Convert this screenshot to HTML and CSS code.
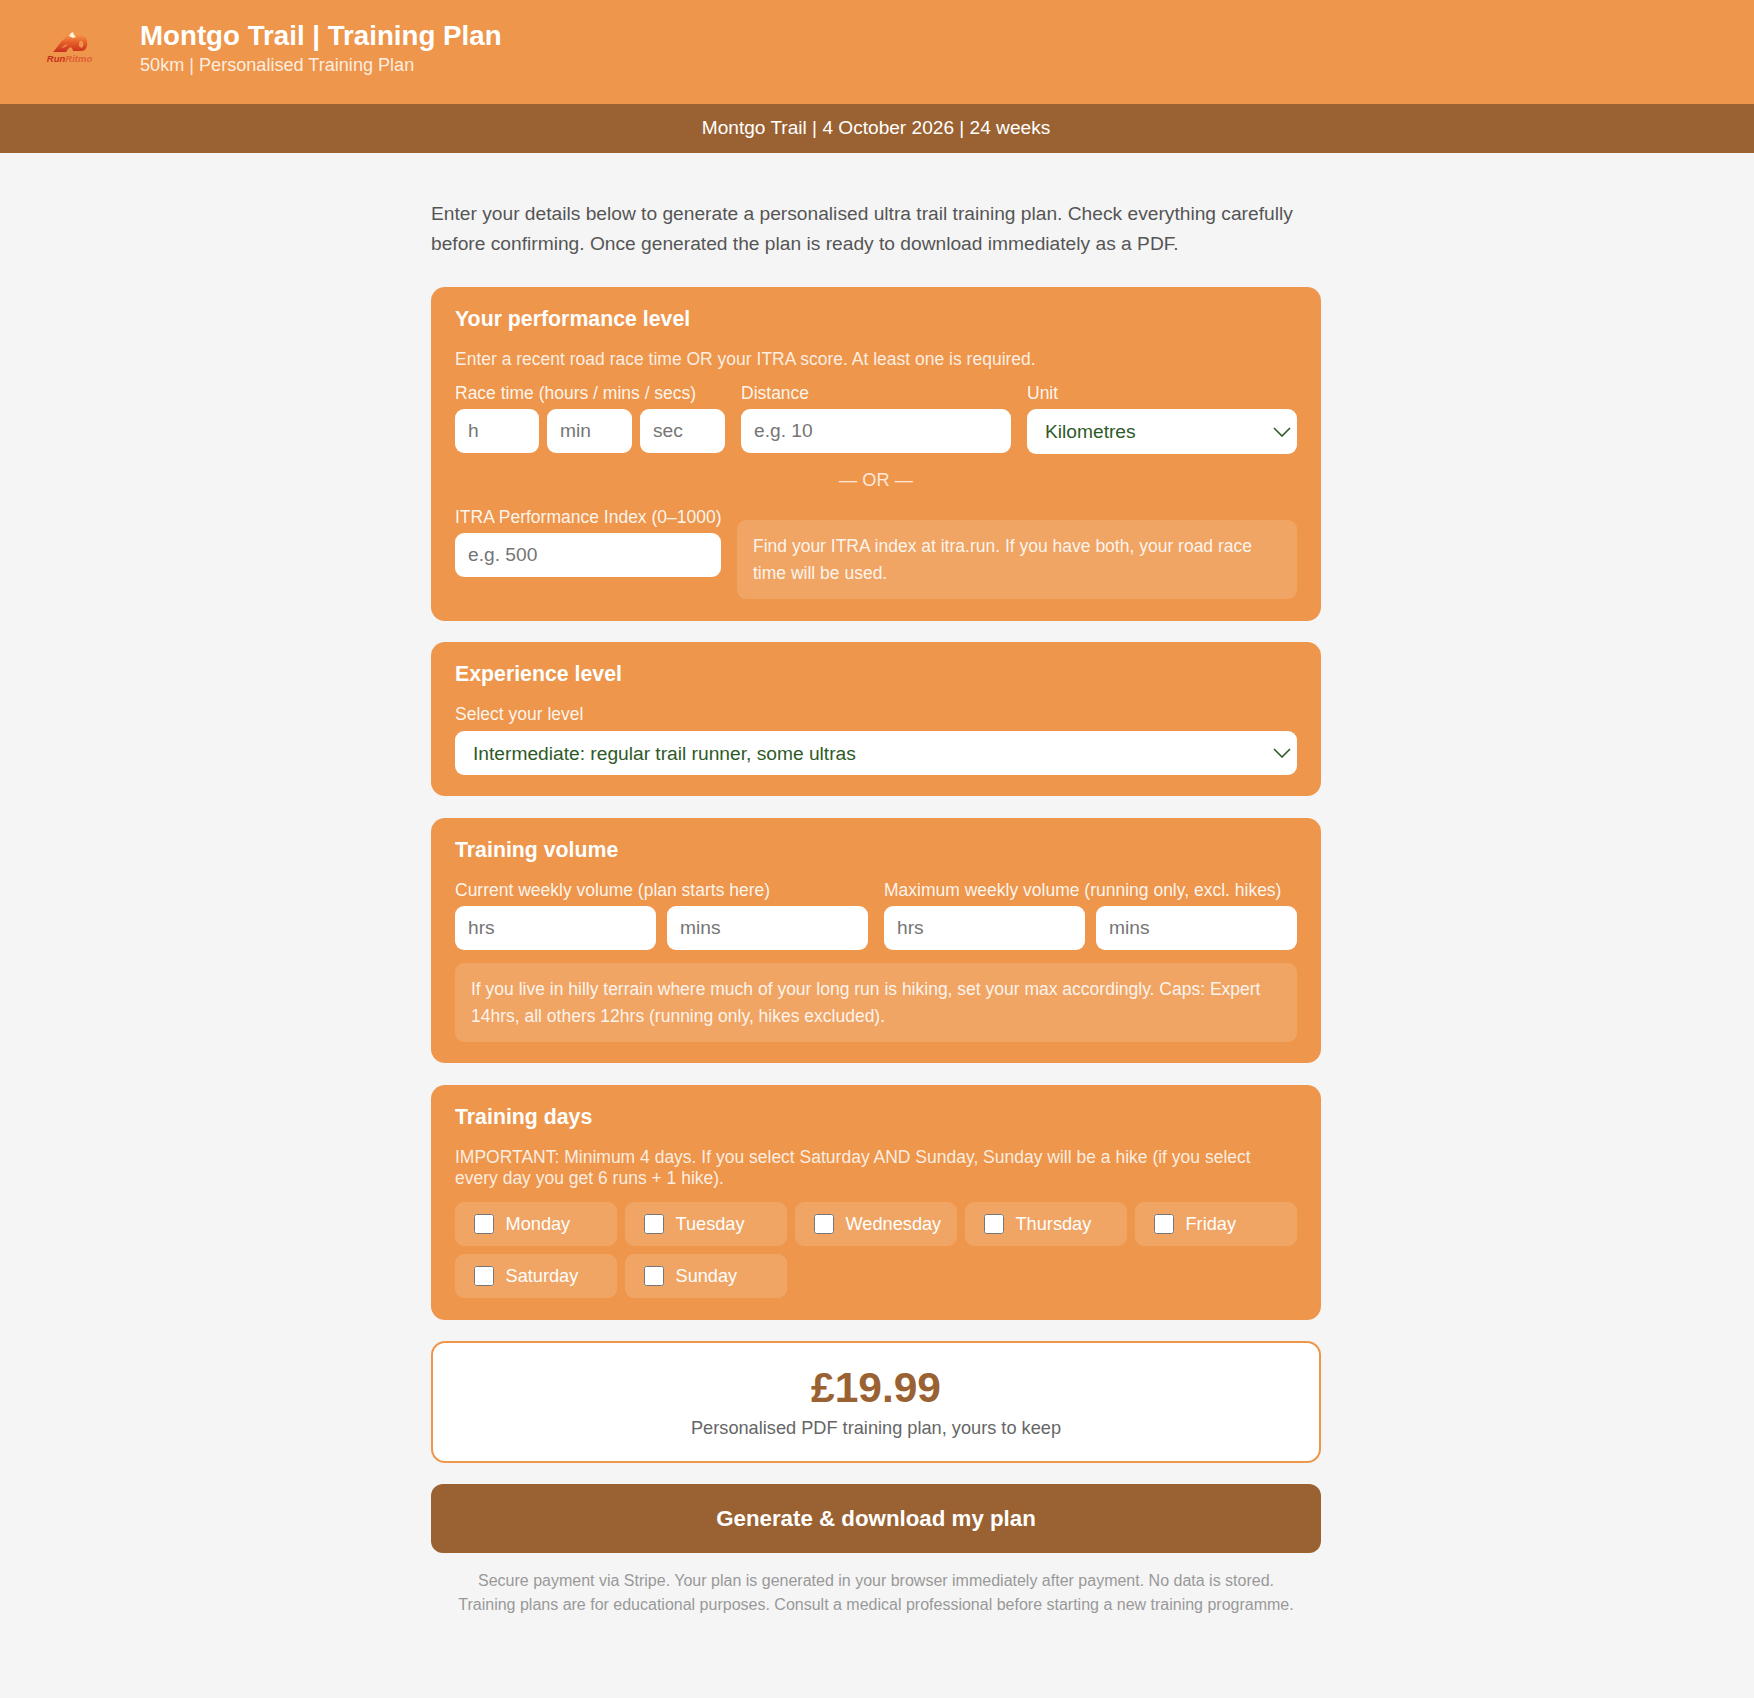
FILE: index.html
```html
<!DOCTYPE html>
<html>
<head>
    <title>Montgo Trail | Training Plan</title>
    <meta charset="utf-8">
    <link rel="stylesheet" href="styles.css">
</head>
<body>
    <header class="site-header">
        <div class="logo">
            <svg viewBox="0 0 44 22" width="44" height="22">
                <defs>
                    <linearGradient id="elephant" x1="0" y1="0" x2="0" y2="1">
                        <stop offset="0" stop-color="#f5a04c"/>
                        <stop offset="0.45" stop-color="#e8622c"/>
                        <stop offset="1" stop-color="#c9301c"/>
                    </linearGradient>
                </defs>
                <path fill="url(#elephant)" d="M5 21 C9 17 12 11 16 8 C19 5 21 3 24 3 C31 1 38 4 39 10 C40 15 38 20 33 20 C30 20 28 18 30 16 C31 15 33 16 33 17 C36 16 36 12 34 10 C32 9 31 11 31 13 L31 20 L25 20 L24 17 C22 16 21 17 20 18 L18 21 Z"/>
                <path fill="#fff3dc" d="M21 5 L23 2 L25 1 L26 4 L28 6 L25 7 Z"/>
                <path fill="#ee964b" d="M13 17 L17 14 L20 13 L17 16 Z"/>
            </svg>
            <span class="logo-text"><b>Run</b>Ritmo</span>
        </div>
        <div class="header-text">
            <h1>Montgo Trail | Training Plan</h1>
            <p>50km | Personalised Training Plan</p>
        </div>
    </header>
    <div class="race-bar">Montgo Trail | 4 October 2026 | 24 weeks</div>

    <main class="page">
        <div class="container">
            <p class="intro">Enter your details below to generate a personalised ultra trail training plan. Check everything carefully before confirming. Once generated the plan is ready to download immediately as a PDF.</p>

            <section class="card">
                <h2>Your performance level</h2>
                <p class="hint">Enter a recent road race time OR your ITRA score. At least one is required.</p>
                <div class="race-row">
                    <div>
                        <label>Race time (hours / mins / secs)</label>
                        <div class="time-inputs">
                            <input type="text" placeholder="h">
                            <input type="text" placeholder="min">
                            <input type="text" placeholder="sec">
                        </div>
                    </div>
                    <div>
                        <label>Distance</label>
                        <input type="text" placeholder="e.g. 10">
                    </div>
                    <div>
                        <label>Unit</label>
                        <select class="unit-select"><option>Kilometres</option></select>
                    </div>
                </div>
                <div class="or">— OR —</div>
                <div class="itra-row">
                    <div class="itra-field">
                        <label>ITRA Performance Index (0–1000)</label>
                        <input type="text" placeholder="e.g. 500">
                    </div>
                    <div class="note">Find your ITRA index at itra.run. If you have both, your road race time will be used.</div>
                </div>
            </section>

            <section class="card level-card">
                <h2>Experience level</h2>
                <label>Select your level</label>
                <select class="level-select"><option>Intermediate: regular trail runner, some ultras</option></select>
            </section>

            <section class="card volume-card">
                <h2>Training volume</h2>
                <div class="volume-row">
                    <div>
                        <label>Current weekly volume (plan starts here)</label>
                        <div class="pair">
                            <input type="text" placeholder="hrs">
                            <input type="text" placeholder="mins">
                        </div>
                    </div>
                    <div>
                        <label>Maximum weekly volume (running only, excl. hikes)</label>
                        <div class="pair">
                            <input type="text" placeholder="hrs">
                            <input type="text" placeholder="mins">
                        </div>
                    </div>
                </div>
                <div class="note volume-note">If you live in hilly terrain where much of your long run is hiking, set your max accordingly. Caps: Expert 14hrs, all others 12hrs (running only, hikes excluded).</div>
            </section>

            <section class="card">
                <h2>Training days</h2>
                <p class="hint">IMPORTANT: Minimum 4 days. If you select Saturday AND Sunday, Sunday will be a hike (if you select<br>every day you get 6 runs + 1 hike).</p>
                <div class="days">
                    <label class="day"><input type="checkbox">Monday</label>
                    <label class="day"><input type="checkbox">Tuesday</label>
                    <label class="day"><input type="checkbox">Wednesday</label>
                    <label class="day"><input type="checkbox">Thursday</label>
                    <label class="day"><input type="checkbox">Friday</label>
                    <label class="day"><input type="checkbox">Saturday</label>
                    <label class="day"><input type="checkbox">Sunday</label>
                </div>
            </section>

            <div class="price-box">
                <div class="price">£19.99</div>
                <div class="price-text">Personalised PDF training plan, yours to keep</div>
            </div>

            <button class="generate" type="button">Generate &amp; download my plan</button>

            <p class="small-print">Secure payment via Stripe. Your plan is generated in your browser immediately after payment. No data is stored.<br>Training plans are for educational purposes. Consult a medical professional before starting a new training programme.</p>
        </div>
    </main>
</body>
</html>
```

FILE: styles.css
```css
* {
    box-sizing: border-box;
}
body {
    font-family: "Liberation Sans", Arial, sans-serif;
    color: #555;
    margin: 0;
    background-color: #f5f5f5;
}
.site-header {
    display: flex;
    align-items: flex-start;
    height: 104px;
    padding: 19px 28px 0;
    background-color: #ee964b;
    color: white;
}
.logo {
    width: 83px;
    margin-right: 28px;
    padding-top: 12px;
    display: flex;
    flex-direction: column;
    align-items: center;
}
.logo svg {
    display: block;
}
.logo-text {
    margin-top: 2px;
    font-size: 9.5px;
    line-height: 8px;
    font-style: italic;
    color: #df5f35;
    font-weight: bold;
}
.logo-text b {
    color: #c9301c;
}
.header-text {
    padding-left: 1px;
}
h1 {
    margin: 0;
    font-size: 27.7px;
    line-height: 34px;
}
.site-header p {
    margin: 0;
    font-size: 18.1px;
    line-height: 24px;
    color: rgba(255,255,255,0.85);
}
.race-bar {
    height: 49px;
    padding-right: 2px;
    line-height: 47px;
    text-align: center;
    font-size: 19.1px;
    color: white;
    background-color: #9a6232;
}
.page {
    padding-right: 2px;
}
.container {
    width: 890px;
    margin: 0 auto;
    padding-top: 46px;
}
.intro {
    margin: 0 0 28px;
    font-size: 19.2px;
    line-height: 30px;
}
.card {
    background-color: #ee964b;
    border-radius: 14px;
    padding: 18px 24px 22px;
    margin-bottom: 21px;
    color: white;
}
.level-card,
.volume-card {
    padding-bottom: 21px;
    margin-bottom: 22px;
}
h2 {
    margin: 0 0 16px;
    font-size: 21.3px;
    line-height: 28px;
}
.hint {
    margin: 0 0 13px;
    font-size: 17.5px;
    line-height: 21px;
    color: rgba(255,255,255,0.85);
}
.card label {
    display: block;
    font-size: 17.5px;
    line-height: 20px;
    margin-bottom: 6px;
    color: rgba(255,255,255,0.92);
}
.card input[type="text"] {
    display: block;
    width: 100%;
    height: 44px;
    padding: 0 13px;
    border: none;
    border-radius: 9px;
    font-family: inherit;
    font-size: 19.2px;
    background-color: white;
}
.card input::placeholder {
    color: #757575;
}
select {
    display: block;
    width: 100%;
    height: 44px;
    padding: 0 18px;
    border: none;
    border-radius: 9px;
    appearance: none;
    font-family: inherit;
    font-size: 19.2px;
    color: #2d5a27;
    background-color: white;
    background-image: url("data:image/svg+xml,%3Csvg xmlns='http://www.w3.org/2000/svg' width='18' height='10'%3E%3Cpath d='M1 1l8 8 8-8' fill='none' stroke='%232d5a27' stroke-width='1.6'/%3E%3C/svg%3E");
    background-repeat: no-repeat;
    background-position: right 6px center;
}
.unit-select {
    height: 45px;
}
.level-select {
    margin-top: 7px;
}
.race-row {
    display: grid;
    grid-template-columns: repeat(3, 1fr);
    gap: 16px;
}
.time-inputs {
    display: grid;
    grid-template-columns: 84px 85px 85px;
    gap: 8px;
}
.or {
    margin: 14px 0 15px;
    text-align: center;
    font-size: 18.2px;
    line-height: 24px;
    color: rgba(255,255,255,0.8);
}
.itra-row {
    display: grid;
    grid-template-columns: 266px 1fr;
    gap: 16px;
    align-items: end;
}
.itra-field {
    margin-bottom: 22px;
}
.itra-field label {
    white-space: nowrap;
}
.note {
    padding: 13px 16px;
    border-radius: 9px;
    font-size: 17.5px;
    line-height: 26.5px;
    color: rgba(255,255,255,0.9);
    background-color: rgba(255,255,255,0.15);
}
.volume-row {
    display: grid;
    grid-template-columns: repeat(2, 1fr);
    gap: 16px;
}
.pair {
    display: grid;
    grid-template-columns: repeat(2, 1fr);
    gap: 11px;
}
.volume-note {
    margin-top: 13px;
}
.days {
    display: grid;
    grid-template-columns: repeat(5, 1fr);
    gap: 8px;
}
.card .day {
    display: flex;
    align-items: center;
    height: 44px;
    margin: 0;
    padding: 0 0 0 18.5px;
    font-size: 18.2px;
    color: white;
    border-radius: 9px;
    background-color: rgba(255,255,255,0.15);
}
.day input {
    width: 20px;
    height: 20px;
    margin: 0 12px 0 0;
}
.price-box {
    height: 122px;
    margin-bottom: 21px;
    padding-top: 20px;
    text-align: center;
    background-color: white;
    border: 2px solid #ee964b;
    border-radius: 14px;
}
.price {
    font-size: 42.5px;
    line-height: 50px;
    font-weight: bold;
    color: #9a6232;
}
.price-text {
    margin-top: 3px;
    font-size: 18.2px;
    line-height: 24px;
    color: #666;
}
.generate {
    display: block;
    width: 100%;
    height: 69px;
    border: none;
    border-radius: 12px;
    font-family: inherit;
    font-size: 22.3px;
    font-weight: bold;
    color: white;
    background-color: #9a6232;
}
.small-print {
    margin: 16px 0 0;
    text-align: center;
    font-size: 16px;
    line-height: 24px;
    color: #999;
}
```
